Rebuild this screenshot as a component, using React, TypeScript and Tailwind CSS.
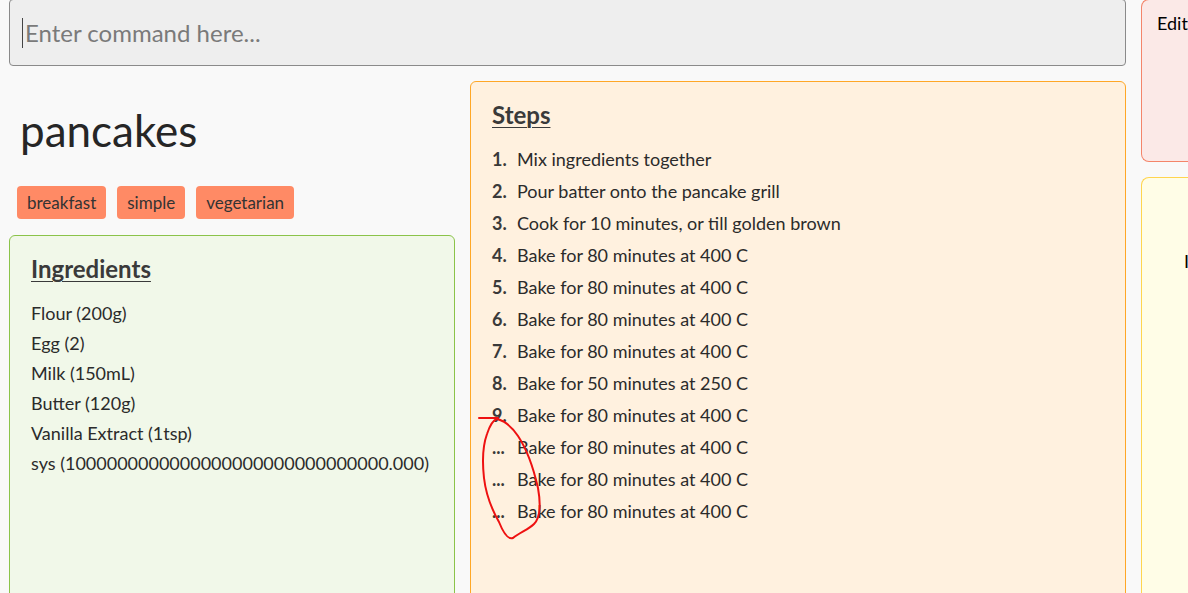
import React from 'react';

const font = { fontFamily: 'Lato, "Noto Sans", sans-serif' };

const tags = ['breakfast', 'simple', 'vegetarian'];

const ingredients = [
  'Flour (200g)',
  'Egg (2)',
  'Milk (150mL)',
  'Butter (120g)',
  'Vanilla Extract (1tsp)',
  'sys (1000000000000000000000000000000.000)',
];

const steps: [string, string][] = [
  ['1.', 'Mix ingredients together'],
  ['2.', 'Pour batter onto the pancake grill'],
  ['3.', 'Cook for 10 minutes, or till golden brown'],
  ['4.', 'Bake for 80 minutes at 400 C'],
  ['5.', 'Bake for 80 minutes at 400 C'],
  ['6.', 'Bake for 80 minutes at 400 C'],
  ['7.', 'Bake for 80 minutes at 400 C'],
  ['8.', 'Bake for 50 minutes at 250 C'],
  ['9.', 'Bake for 80 minutes at 400 C'],
  ['...', 'Bake for 80 minutes at 400 C'],
  ['...', 'Bake for 80 minutes at 400 C'],
  ['...', 'Bake for 80 minutes at 400 C'],
];

export default function App() {
  return (
    <div
      className="relative flex h-[593px] w-[1188px] overflow-hidden bg-[#f9f9f9] text-[#2b2b2b]"
      style={font}
    >
      {/* main area */}
      <div className="flex w-[1141px] shrink-0 flex-col pl-[9px] pr-[15px]">
        {/* command box */}
        <div className="mt-[-1px] flex h-[67px] shrink-0 items-center rounded-[4px] border border-[#8a8a8a] bg-[#eeeeee] pl-[12px]">
          <span className="h-[30px] w-px bg-[#444]" />
          <span className="ml-[2px] text-[24px] text-[#7a7a7a]">Enter command here...</span>
        </div>

        <div className="mt-[15px] flex shrink-0 gap-[15px]">
          {/* left column */}
          <div className="flex w-[446px] shrink-0 flex-col">
            <h1 className="mt-[23px] pl-[11px] text-[44px] leading-[52px] text-[#262626]">pancakes</h1>
            <div className="mt-[30px] flex gap-[11px] pl-[8px]">
              {tags.map((t) => (
                <span
                  key={t}
                  className="flex h-[33px] items-center rounded-[4px] bg-[#ff8a65] px-[10px] text-[17px] text-[#333]"
                >
                  {t}
                </span>
              ))}
            </div>
            <div className="mt-[16px] h-[400px] shrink-0 rounded-[6px] border border-[#8bc34a] bg-[#f1f8e9] px-[21px] pt-[19px]">
              <h2 className="text-[24px] font-bold leading-[28px] text-[#3a3a3a] underline decoration-1 underline-offset-[3px]">
                Ingredients
              </h2>
              <ul className="mt-[15px] flex flex-col">
                {ingredients.map((i) => (
                  <li key={i} className="text-[18px] leading-[30px]">
                    {i}
                  </li>
                ))}
              </ul>
            </div>
          </div>

          {/* steps */}
          <div className="relative h-[540px] flex-1 rounded-[6px] border border-[#ffa726] bg-[#fff1df] px-[21px] pt-[19px]">
            <h2 className="text-[24px] font-bold leading-[28px] text-[#3a3a3a] underline decoration-1 underline-offset-[3px]">
              Steps
            </h2>
            <ol className="mt-[14px] flex flex-col">
              {steps.map(([n, s], i) => (
                <li key={i} className="flex text-[18px] leading-[32px]">
                  <span className="w-[25px] shrink-0 font-bold text-[#3a3a3a]">{n}</span>
                  <span>{s}</span>
                </li>
              ))}
            </ol>
          </div>
        </div>
      </div>

      {/* right column */}
      <div className="flex flex-1 flex-col gap-[15px]">
        <div className="mt-[-1px] h-[163px] shrink-0 rounded-l-[8px] border border-r-0 border-[#f4856a] bg-[#fbe9e7] pl-[15px] pt-[10px] text-[18px] text-black">
          Edit
        </div>
        <div className="h-[440px] shrink-0 rounded-l-[8px] border border-r-0 border-[#ffd54f] bg-[#fffde7] pl-[42px] pt-[70px] text-[18px] text-black">
          I
        </div>
      </div>

      {/* red hand annotation */}
      <svg className="pointer-events-none absolute left-0 top-0" width="1188" height="593">
        <path
          d="M479 418 L498 418 M497 419 C505 421 512 427 518 436 C526 448 533 466 538 488 C541 505 540 518 534 524 C528 530 520 532 513 538 C508 540 503 532 499 522 C491 508 486 495 484 478 C482 460 483 445 487 434 C490 425 493 420 497 419"
          fill="none"
          stroke="#ee1111"
          strokeWidth="2"
          strokeLinecap="round"
        />
      </svg>
    </div>
  );
}
